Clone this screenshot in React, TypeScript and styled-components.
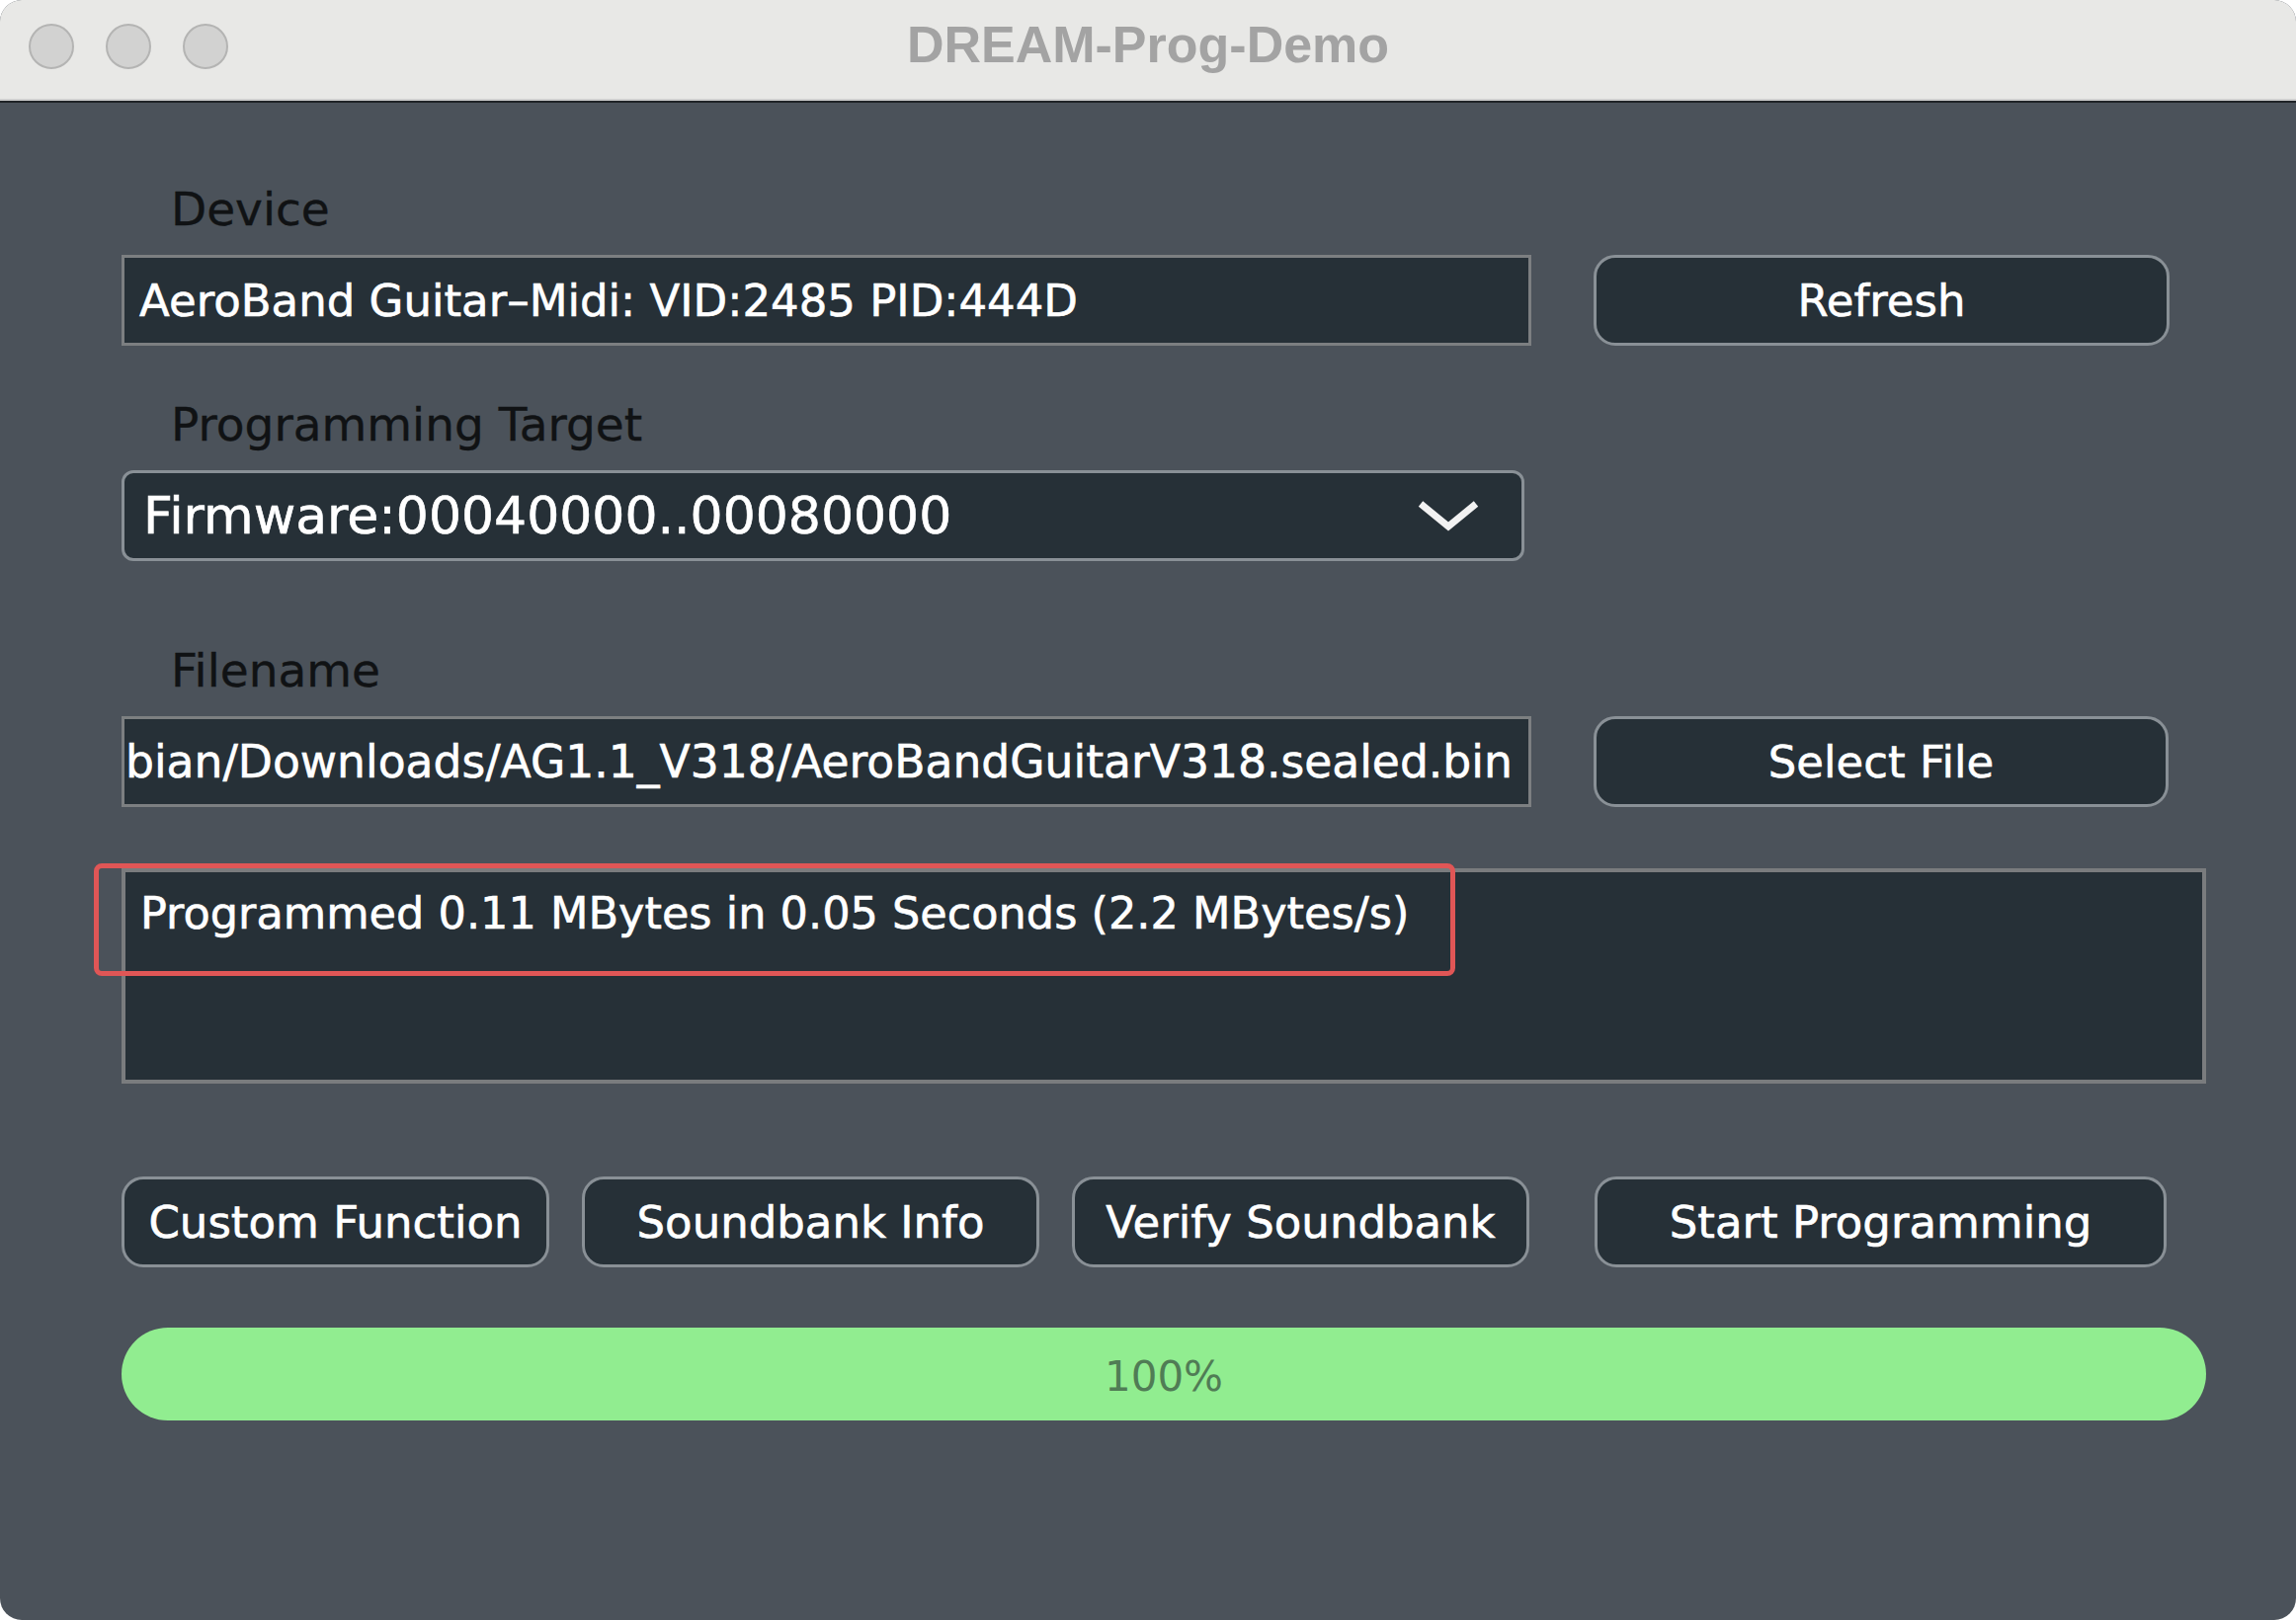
import React from "react";
import styled, { createGlobalStyle } from "styled-components";

const GlobalStyle = createGlobalStyle`
  html, body {
    margin: 0;
    padding: 0;
    background: #ffffff;
  }
  body {
    width: 2324px;
    height: 1640px;
    overflow: hidden;
  }
`;

const Window = styled.div`
  width: 2324px;
  height: 1640px;
  border-radius: 22px;
  overflow: hidden;
  background: #4b525a;
  display: flex;
  flex-direction: column;
  font-family: "DejaVu Sans", Verdana, sans-serif;
`;

const TitleBar = styled.div`
  flex: none;
  height: 102px;
  display: grid;
  grid-template-columns: 1fr auto 1fr;
  align-items: center;
  background: #e8e8e6;
  border-bottom: 2px solid #1f2327;
  box-shadow: inset 0 -2px 0 #cfcfcf;
`;

const Lights = styled.div`
  display: flex;
  gap: 32px;
  padding-left: 29px;
  padding-bottom: 8px;
`;

const Light = styled.span`
  width: 46px;
  height: 46px;
  box-sizing: border-box;
  border-radius: 50%;
  background: #d2d2d1;
  border: 2px solid #b4b4b3;
`;

const Title = styled.div`
  font-family: "Liberation Sans", Arial, sans-serif;
  font-weight: 700;
  font-size: 52px;
  color: #a3a3a3;
  padding-bottom: 12px;
`;

const Body = styled.div`
  flex: 1;
  padding: 0 91px 0 123px;
  display: flex;
  flex-direction: column;
`;

const Label = styled.div<{ $top: number }>`
  margin-top: ${(p) => p.$top}px;
  padding-left: 50px;
  height: 60px;
  line-height: 60px;
  font-size: 47px;
  color: #101214;
  -webkit-text-stroke: 0.4px #101214;
`;

const Row = styled.div`
  display: flex;
  gap: 63px;
  margin-top: 16px;
`;

const TextField = styled.div`
  width: 1427px;
  height: 92px;
  box-sizing: border-box;
  border: 3px solid #7c7f81;
  background: #263037;
  color: #ffffff;
  -webkit-text-stroke: 0.6px #ffffff;
  font-size: 45px;
  padding: 0 15px;
  display: flex;
  align-items: center;
  overflow: hidden;
  white-space: nowrap;
`;

const PathField = styled(TextField)`
  padding: 0 0 0 1px;
  font-size: 45.6px;
`;

const PanelButton = styled.button<{ $width: number; $push?: number }>`
  width: ${(p) => p.$width}px;
  height: 92px;
  margin-left: ${(p) => p.$push ?? 0}px;
  box-sizing: border-box;
  border: 3px solid #899096;
  border-radius: 22px;
  background: #263037;
  color: #ffffff;
  -webkit-text-stroke: 0.6px #ffffff;
  font-family: inherit;
  font-size: 45px;
  padding: 0;
  white-space: nowrap;
`;

const Select = styled.div`
  width: 1420px;
  height: 92px;
  box-sizing: border-box;
  margin-top: 16px;
  border: 3px solid #899096;
  border-radius: 12px;
  background: #263037;
  color: #ffffff;
  -webkit-text-stroke: 0.6px #ffffff;
  font-size: 52px;
  padding: 0 42px 0 19px;
  display: flex;
  align-items: center;
  justify-content: space-between;
`;

const LogBox = styled.div`
  position: relative;
  margin-top: 62px;
  height: 218px;
  box-sizing: border-box;
  border: 4px solid #7a7c7e;
  background: #263037;
  color: #ffffff;
  -webkit-text-stroke: 0.6px #ffffff;
  font-size: 44.6px;
  padding: 12px 15px;
  line-height: 60px;
`;

const Highlight = styled.div`
  position: absolute;
  left: -32px;
  top: -9px;
  width: 1378px;
  height: 114px;
  box-sizing: border-box;
  border: 5px solid #e05656;
  border-radius: 8px;
  pointer-events: none;
`;

const ButtonRow = styled.div`
  display: flex;
  gap: 33px;
  margin-top: 94px;
`;

const Progress = styled.div`
  margin-top: 61px;
  height: 94px;
  border-radius: 47px;
  background: #91ed90;
  color: #507c55;
  font-size: 42px;
  display: flex;
  align-items: center;
  justify-content: center;
  padding-top: 4px;
  box-sizing: border-box;
`;

const Chevron = () => (
  <svg width="64" height="34" viewBox="0 0 64 34">
    <polyline
      points="4,5 32,28 60,5"
      fill="none"
      stroke="#f2f2f2"
      strokeWidth="7"
      strokeLinejoin="miter"
    />
  </svg>
);

export default function App() {
  return (
    <>
      <GlobalStyle />
      <Window>
        <TitleBar>
          <Lights>
            <Light />
            <Light />
            <Light />
          </Lights>
          <Title>DREAM-Prog-Demo</Title>
          <div />
        </TitleBar>
        <Body>
          <Label $top={78}>Device</Label>
          <Row>
            <TextField>AeroBand Guitar–Midi: VID:2485 PID:444D</TextField>
            <PanelButton $width={583}>Refresh</PanelButton>
          </Row>

          <Label $top={50}>Programming Target</Label>
          <Select>
            <span>Firmware:00040000..00080000</span>
            <Chevron />
          </Select>

          <Label $top={81}>Filename</Label>
          <Row>
            <PathField>bian/Downloads/AG1.1_V318/AeroBandGuitarV318.sealed.bin</PathField>
            <PanelButton $width={582}>Select File</PanelButton>
          </Row>

          <LogBox>
            Programmed 0.11 MBytes in 0.05 Seconds (2.2 MBytes/s)
            <Highlight />
          </LogBox>

          <ButtonRow>
            <PanelButton $width={433}>Custom Function</PanelButton>
            <PanelButton $width={463}>Soundbank Info</PanelButton>
            <PanelButton $width={463}>Verify Soundbank</PanelButton>
            <PanelButton $width={579} $push={33}>
              Start Programming
            </PanelButton>
          </ButtonRow>

          <Progress>100%</Progress>
        </Body>
      </Window>
    </>
  );
}
